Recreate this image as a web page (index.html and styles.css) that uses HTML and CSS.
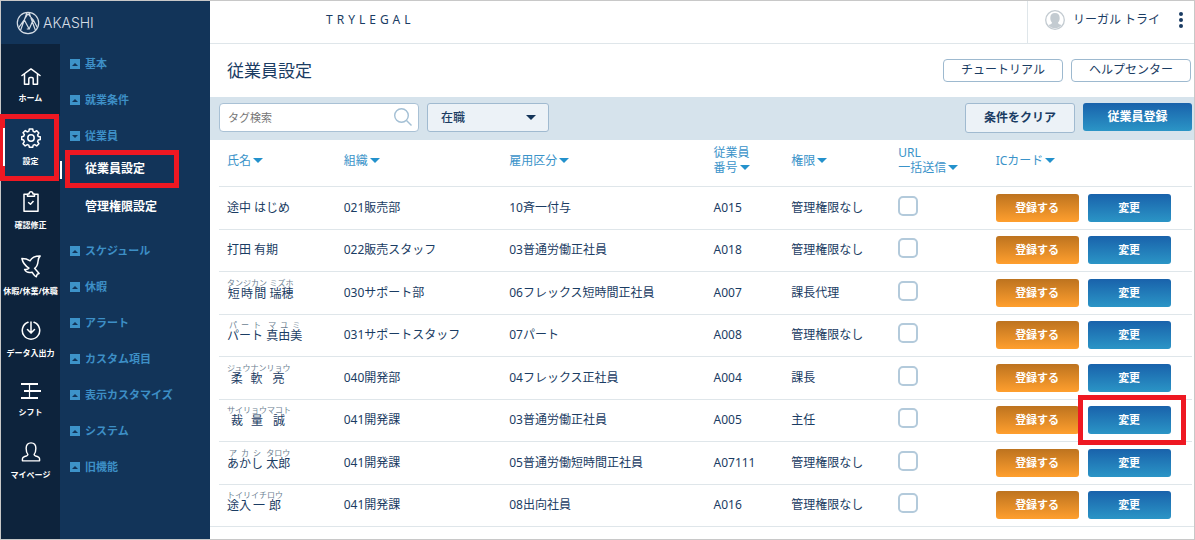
FILE: index.html
```html
<!DOCTYPE html>
<html lang="ja">
<head>
<meta charset="utf-8">
<title>従業員設定 | AKASHI</title>
<link rel="stylesheet" href="styles.css">
</head>
<body>
<div class="app">
  <aside class="sidebar">
    <a class="logo" href="#">
      <svg width="24" height="24" viewBox="0 0 24 24" fill="none" stroke="currentColor" stroke-width="1.200" stroke-linejoin="round"><circle cx="12" cy="12" r="10.700"/><path d="M4.500 19.500L11 1.500h2l6.500 18M2.500 16.800L8.200 8.800l5 9.200 4-9.200M8.200 8.800l3.800-6M13.200 18l-2.400 0M17.200 8.800l4.300 8M17.200 8.800L12 2.800"/></svg>
      <span>AKASHI</span>
    </a>
    <div class="navs">
      <nav class="rail" aria-label="メイン">
        <a class="rail-item" href="#">
          <svg width="20" height="17" viewBox="0 0 20 17" fill="none" stroke="currentColor" stroke-width="1.500" stroke-linejoin="round" stroke-linecap="round"><path d="M1 7.500L10 .9l9 6.600M3.500 6v10.200h4.300v-5.400c0-.8.4-1.200 1.200-1.200h2c.8 0 1.200.4 1.200 1.200v5.400h4.300V6"/></svg>
          <span>ホーム</span>
        </a>
        <a class="rail-item current marked" href="#">
          <svg width="20" height="20" viewBox="0 0 20 20" fill="none" stroke="currentColor" stroke-width="1.500" stroke-linejoin="round"><path d="M8.300 1h3.400l.5 2.400 1.500.6 2.100-1.300 2.100 2.200-1.300 2 .6 1.500 2.100.4v2.800l-2.100.5-.6 1.500 1.300 2.100-2.200 2.200-2-1.300-1.500.6-.5 2.100H8.400l-.6-2.100-1.500-.6-2.100 1.300L2 15.700l1.300-2-.6-1.600-2-.5V8.700l2-.5.6-1.500L2 4.700l2.300-2.100 2 1.300 1.500-.6z"/><circle cx="10" cy="10" r="3.200"/></svg>
          <span>設定</span>
        </a>
        <a class="rail-item" href="#">
          <svg width="16" height="21" viewBox="0 0 16 21" fill="none" stroke="currentColor" stroke-width="1.500" stroke-linejoin="round"><path d="M4.500 3.200H1v17h14v-17h-3.500M4.500 5.300V2.900H6C6.200 1.400 7 .8 8 .8s1.800.6 2 2.100h1.500v2.400z"/><path d="M5.200 11.300l2.300 2L10.500 10"/></svg>
          <span>確認修正</span>
        </a>
        <a class="rail-item" href="#">
          <svg width="20" height="23" viewBox="0 0 20 23" fill="none" stroke="currentColor" stroke-width="1.500" stroke-linejoin="round"><path d="M.9 3.500c2.700 0 5.600.6 8.200 2.300C10.600 2.600 14.500.9 19.200.9c-1.500 1.500-1.900 3-2.100 5.100-.3 3.400-1.400 5.900-3.500 7.300l4.500 5.200-1.900.7-.9 2.600c-1.500-.2-2.400-1.600-4.200-4.600-3.500.9-6.300-.2-7.500-2.700 2.400.3 3.600-.2 4.400-1.400C4.200 10.800 1.700 7.500.9 3.500z"/></svg>
          <span>休暇/休業/休職</span>
        </a>
        <a class="rail-item" href="#">
          <svg width="20" height="19" viewBox="0 0 20 19" fill="none" stroke="currentColor" stroke-width="1.500" stroke-linecap="round" stroke-linejoin="round"><path d="M7 1.300a8.700 8.700 0 1 0 6 0M10 1v10.800M6.500 8.500l3.500 3.600 3.500-3.600"/></svg>
          <span>データ入出力</span>
        </a>
        <a class="rail-item" href="#">
          <svg width="20" height="16" viewBox="0 1 20 16" fill="none" stroke="currentColor" stroke-width="2"><path d="M0 2h17M3 9h17M0 16h17"/><path stroke-width="1.200" d="M8.500 2v14"/></svg>
          <span>シフト</span>
        </a>
        <a class="rail-item" href="#">
          <svg width="20" height="20" viewBox="0 0 20 21" fill="none" stroke="currentColor" stroke-width="1.500" stroke-linejoin="round"><path d="M1 19.800v-2.200c0-1.300.8-1.900 2.400-2.400 2.400-.7 3.300-1 3.300-2.200C5.400 11.500 4.900 9.300 4.900 6.600 4.900 3 6.900.9 10 .9s5.100 2.100 5.100 5.700c0 2.700-.5 4.900-1.800 6.400 0 1.200.9 1.500 3.300 2.200 1.600.5 2.400 1.100 2.400 2.400v2.200z"/></svg>
          <span>マイページ</span>
        </a>
      </nav>
      <nav class="menu" aria-label="設定">
        <a class="group" href="#"><i class="fold"></i>基本</a>
        <a class="group" href="#"><i class="fold"></i>就業条件</a>
        <a class="group" href="#"><i class="fold open"></i>従業員</a>
        <div class="submenu">
          <a class="sub current" href="#"><span class="marked">従業員設定</span></a>
          <a class="sub" href="#"><span>管理権限設定</span></a>
        </div>
        <a class="group" href="#"><i class="fold"></i>スケジュール</a>
        <a class="group" href="#"><i class="fold"></i>休暇</a>
        <a class="group" href="#"><i class="fold"></i>アラート</a>
        <a class="group" href="#"><i class="fold"></i>カスタム項目</a>
        <a class="group" href="#"><i class="fold"></i>表示カスタマイズ</a>
        <a class="group" href="#"><i class="fold"></i>システム</a>
        <a class="group" href="#"><i class="fold"></i>旧機能</a>
      </nav>
    </div>
  </aside>
  <div class="page">
    <header class="topbar">
      <span class="company">TRYLEGAL</span>
      <div class="user">
        <svg width="20" height="20" viewBox="0 0 20 20"><circle cx="10" cy="10" r="9.300" fill="#fff" stroke="#c3cbd1" stroke-width="1.300"/><path fill="#c3cbd1" d="M10 3c3 0 4.700 1.900 4.700 4.900 0 2-.7 3.500-1.700 4.500 0 1.200 1 1.700 3.600 2.600-1.600 2-3.900 3.300-6.600 3.300S5 17 3.400 15c2.600-.9 3.600-1.400 3.600-2.600-1-1-1.700-2.500-1.700-4.500C5.300 4.900 7 3 10 3z"/></svg>
        <span>リーガル トライ</span>
        <button class="more" type="button" aria-label="メニュー"><svg width="4" height="16" viewBox="0 0 4 16" fill="currentColor"><circle cx="2" cy="2" r="2"/><circle cx="2" cy="8" r="2"/><circle cx="2" cy="14" r="2"/></svg></button>
      </div>
    </header>
    <div class="heading">
      <h1>従業員設定</h1>
      <a class="pill" href="#">チュートリアル</a>
      <a class="pill" href="#">ヘルプセンター</a>
    </div>
    <form class="filters">
      <div class="search">
        <input type="text" placeholder="タグ検索" aria-label="タグ検索">
        <svg width="18" height="18" viewBox="0 0 18 18" fill="none" stroke="currentColor" stroke-width="1.400"><circle cx="7.500" cy="7.500" r="6.800"/><path d="M12.500 12.500l5 5"/></svg>
      </div>
      <div class="status">
        <select aria-label="在職状況"><option>在職</option></select>
      </div>
      <button class="clear" type="button">条件をクリア</button>
      <button class="btn blue add" type="button">従業員登録</button>
    </form>
    <main class="list">
      <table>
        <colgroup><col class="c-name"><col class="c-org"><col class="c-type"><col class="c-no"><col class="c-role"><col class="c-url"><col class="c-card"></colgroup>
        <thead>
          <tr>
            <th><button class="sort" type="button">氏名</button></th>
            <th><button class="sort" type="button">組織</button></th>
            <th><button class="sort" type="button">雇用区分</button></th>
            <th><button class="sort" type="button">従業員<br>番号</button></th>
            <th><button class="sort" type="button">権限</button></th>
            <th><button class="sort" type="button">URL<br>一括送信</button></th>
            <th><button class="sort" type="button">ICカード</button></th>
          </tr>
        </thead>
        <tbody>
          <tr><td>途中 はじめ</td><td>021販売部</td><td>10斉一付与</td><td>A015</td><td>管理権限なし</td><td><input type="checkbox" aria-label="途中 はじめ"></td><td><div class="actions"><button class="btn orange" type="button">登録する</button><button class="btn blue" type="button">変更</button></div></td></tr>
          <tr><td>打田 有期</td><td>022販売スタッフ</td><td>03普通労働正社員</td><td>A018</td><td>管理権限なし</td><td><input type="checkbox" aria-label="打田 有期"></td><td><div class="actions"><button class="btn orange" type="button">登録する</button><button class="btn blue" type="button">変更</button></div></td></tr>
          <tr><td class="kana"><ruby>短時間<rt>タンジカン</rt></ruby> <ruby>瑞穂<rt>ミズホ</rt></ruby></td><td>030サポート部</td><td>06フレックス短時間正社員</td><td>A007</td><td>課長代理</td><td><input type="checkbox" aria-label="短時間 瑞穂"></td><td><div class="actions"><button class="btn orange" type="button">登録する</button><button class="btn blue" type="button">変更</button></div></td></tr>
          <tr><td class="kana"><ruby>パート<rt>パート</rt></ruby> <ruby>真由美<rt>マユミ</rt></ruby></td><td>031サポートスタッフ</td><td>07パート</td><td>A008</td><td>管理権限なし</td><td><input type="checkbox" aria-label="パート 真由美"></td><td><div class="actions"><button class="btn orange" type="button">登録する</button><button class="btn blue" type="button">変更</button></div></td></tr>
          <tr><td class="kana"><ruby>柔軟<rt>ジュウナン</rt></ruby><ruby>亮<rt>リョウ</rt></ruby></td><td>040開発部</td><td>04フレックス正社員</td><td>A004</td><td>課長</td><td><input type="checkbox" aria-label="柔軟亮"></td><td><div class="actions"><button class="btn orange" type="button">登録する</button><button class="btn blue" type="button">変更</button></div></td></tr>
          <tr><td class="kana"><ruby>裁量<rt>サイリョウ</rt></ruby><ruby>誠<rt>マコト</rt></ruby></td><td>041開発課</td><td>03普通労働正社員</td><td>A005</td><td>主任</td><td><input type="checkbox" aria-label="裁量誠"></td><td><div class="actions"><button class="btn orange" type="button">登録する</button><button class="btn blue marked" type="button">変更</button></div></td></tr>
          <tr><td class="kana"><ruby>あかし<rt>アカシ</rt></ruby> <ruby>太郎<rt>タロウ</rt></ruby></td><td>041開発課</td><td>05普通労働短時間正社員</td><td>A07111</td><td>管理権限なし</td><td><input type="checkbox" aria-label="あかし 太郎"></td><td><div class="actions"><button class="btn orange" type="button">登録する</button><button class="btn blue" type="button">変更</button></div></td></tr>
          <tr><td class="kana"><ruby>途入<rt>トイリ</rt></ruby><ruby>一郎<rt>イチロウ</rt></ruby></td><td>041開発課</td><td>08出向社員</td><td>A016</td><td>管理権限なし</td><td><input type="checkbox" aria-label="途入一郎"></td><td><div class="actions"><button class="btn orange" type="button">登録する</button><button class="btn blue" type="button">変更</button></div></td></tr>
        </tbody>
      </table>
    </main>
  </div>
</div>
</body>
</html>
```
FILE: styles.css
```css
* { box-sizing: border-box; }

body {
  margin: 0;
  color: #1a3c63;
  background: #fff;
  font: 12px/18px "Noto Sans", "Noto Sans CJK JP", sans-serif;
}

a { color: inherit; text-decoration: none; }

button, input, select { font: inherit; color: inherit; margin: 0; }

button { border: 0; padding: 0; background: none; cursor: pointer; }

.app {
  display: flex;
  min-height: 100vh;
  border: 1px solid #c8c8c8;
}

/* Sidebar */
.sidebar {
  flex: none;
  width: 209px;
  display: flex;
  flex-direction: column;
  background: #123459;
}

.logo {
  display: flex;
  align-items: center;
  gap: 3px;
  height: 43px;
  padding-left: 15px;
  color: #d5dde6;
  font: 300 14px/20px Inter, "Liberation Sans", sans-serif;
}

.navs { flex: 1; display: flex; }

.rail {
  width: 59px;
  padding-top: 12px;
  background: #0d233c;
  color: #fff;
}

.rail-item {
  position: relative;
  display: flex;
  flex-direction: column;
  align-items: center;
  gap: 7px;
  padding: 12px 0;
  font-size: 8px;
  line-height: 12px;
  font-weight: 700;
  white-space: nowrap;
}

.rail-item.current { background: #123459; }

.rail-item.current::before {
  content: "";
  position: absolute;
  z-index: 2;
  left: 2px;
  top: 12px;
  width: 2px;
  height: 38px;
  background: #fff;
}

.menu { flex: 1; padding-top: 2px; color: #3d8fc6; }

.group {
  display: flex;
  align-items: center;
  gap: 5px;
  height: 36px;
  padding-left: 10px;
  font-size: 11px;
  font-weight: 700;
}

.fold {
  display: grid;
  place-items: center;
  width: 10px;
  height: 10px;
  background: #3d93c9;
}

.fold::before {
  content: "";
  border: 3px solid transparent;
  border-top: 0;
  border-bottom: 3px solid #123459;
}

.fold.open::before { border-top: 3px solid #123459; border-bottom: 0; }

.submenu {
  display: grid;
  gap: 8px;
  margin-bottom: 11px;
  color: #fff;
  font-weight: 700;
}

.sub {
  position: relative;
  display: flex;
  align-items: center;
  height: 30px;
  padding-left: 25px;
}

.sub.current::before {
  content: "";
  position: absolute;
  left: 0;
  top: 7px;
  width: 2px;
  height: 18px;
  background: #fff;
}

/* Red highlight frames */
.marked { position: relative; }

.marked::after {
  content: "";
  position: absolute;
  z-index: 1;
  border: 5px solid #ee1822;
  pointer-events: none;
}

.rail-item.marked::after { inset: -2px 1px -2px -1px; }
.sub .marked::after { inset: -10px -34px -10px -20px; }
.btn.marked::after { inset: -11px -15px -11px -10px; }

/* Page */
.page { flex: 1; min-width: 0; }

.topbar {
  display: flex;
  justify-content: space-between;
  height: 43px;
  border-bottom: 1px solid #dfe6ea;
}

.company {
  padding: 10px 0 0 116px;
  letter-spacing: 4px;
}

.user {
  display: flex;
  align-items: center;
  gap: 8px;
  padding: 0 11px 4px 17px;
  border-left: 1px solid #dfe6ea;
}

.more { display: flex; margin-left: 11px; }

.heading {
  display: flex;
  align-items: center;
  gap: 8px;
  height: 53px;
  padding: 0 3px 0 17px;
}

h1 { flex: 1; margin: 0; font-size: 17px; line-height: 24px; font-weight: 400; }

.pill {
  width: 120px;
  height: 23px;
  border: 1px solid #9db9cf;
  border-radius: 4px;
  text-align: center;
  line-height: 20px;
}

.filters {
  display: flex;
  gap: 8px;
  height: 43px;
  padding: 6px 2px 0 9px;
  background: #d6e3ec;
}

.search { position: relative; width: 200px; height: 29px; }

.search input {
  width: 100%;
  height: 100%;
  padding: 0 32px 0 8px;
  border: 1px solid #a9c1d5;
  border-radius: 4px;
  background: #fff;
  font-size: 11px;
}

.search input::placeholder { color: #757575; }

.search svg { position: absolute; right: 7px; top: 5px; color: #a3bfd4; }

.status { position: relative; width: 122px; height: 29px; }

.status::after {
  content: "";
  position: absolute;
  right: 13px;
  top: 12px;
  border: 5px solid transparent;
  border-top-color: #143459;
  border-bottom: 0;
  pointer-events: none;
}

.status select {
  appearance: none;
  width: 100%;
  height: 100%;
  padding: 0 13px;
  border: 1px solid #a0bad0;
  border-radius: 3px;
  background: #ecf2f7;
  font-weight: 500;
}

.clear {
  width: 110px;
  height: 30px;
  margin-left: auto;
  border: 1px solid #a0bad0;
  border-radius: 3px;
  background: #ecf2f7;
  font-weight: 700;
}

.btn {
  width: 83px;
  height: 28px;
  border-radius: 3px;
  color: #fff;
  font-size: 11px;
  line-height: 16px;
  font-weight: 700;
}

.blue { background: linear-gradient(#1962ab, #2b95c6); }
.orange { background: linear-gradient(#bd731f, #ff9f2e); }
.add { width: 109px; font-size: 12px; }

/* Employee table */
.list { padding-left: 9px; border-bottom: 1px solid #dfe6ea; }

table {
  width: calc(100% - 2px);
  table-layout: fixed;
  border-collapse: collapse;
}

.c-name { width: 12%; }
.c-org { width: 17%; }
.c-type { width: 21%; }
.c-no { width: 8%; }
.c-role { width: 11%; }
.c-url { width: 10%; }
.c-card { width: 21%; }

th, td {
  padding: 0 0 0 8px;
  text-align: left;
  vertical-align: middle;
  white-space: nowrap;
}

th { height: 46px; padding-bottom: 4px; font-weight: 400; }

tbody td { border-top: 1px solid #dfe6ea; }

tbody tr { height: 42px; }
tbody tr:nth-child(odd) { height: 43px; }

.sort { color: #3a93c9; text-align: left; line-height: 15px; }

.sort::after {
  content: "";
  display: inline-block;
  margin: 0 0 2px 2px;
  border: 5px solid transparent;
  border-top-color: #2391cc;
  border-bottom: 0;
}

.kana { padding-bottom: 5px; }

ruby { ruby-align: space-around; }
rt { font-size: 8px; line-height: 10px; color: #6d7f92; }

td input {
  appearance: none;
  display: block;
  width: 20px;
  height: 20px;
  margin-bottom: 4px;
  border: 2px solid #b3cadb;
  border-radius: 5px;
  background: #fff;
}

.actions { display: flex; gap: 9px; }
```
